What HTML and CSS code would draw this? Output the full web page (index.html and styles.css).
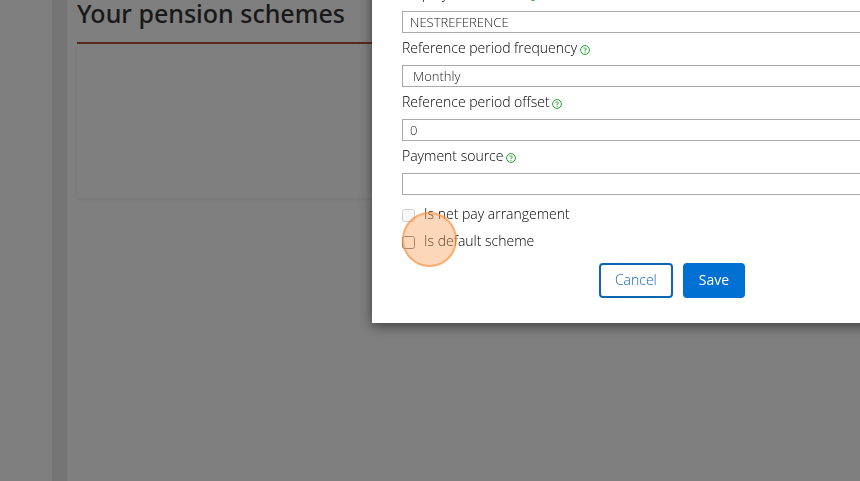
FILE: index.html
```
<!DOCTYPE html>
<html lang="en">
<head>
    <meta charset="UTF-8">
    <meta name="viewport" content="width=device-width, initial-scale=1.0">
    <title>Your pension schemes</title>
    <link rel="stylesheet" href="styles.css">
</head>
<body>
    <svg class="sprite" aria-hidden="true">
        <symbol id="help" viewBox="0 0 10 10">
            <circle cx="5" cy="5" r="4.4" fill="none" stroke="currentColor" stroke-width="1"/>
            <path d="M3.4 3.1H5.3Q6.6 3.3 6.4 4.3Q6.2 5 5 5.2V6" fill="none" stroke="currentColor" stroke-width="0.9"/>
            <path d="M4.5 6.8H5.5V7.8H4.5Z" fill="currentColor"/>
        </symbol>
    </svg>

    <div class="page">
        <div class="sidebar"></div>
        <main class="content">
            <h1>Your pension schemes</h1>
            <div class="panel"></div>
        </main>
    </div>

    <div class="overlay">
        <form class="modal" role="dialog" aria-label="Pension scheme">
            <div class="form-group">
                <label for="employerRef">Employer reference <svg class="help"><use href="#help"/></svg></label>
                <input type="text" id="employerRef" value="NESTREFERENCE">
            </div>
            <div class="form-group">
                <label for="frequency">Reference period frequency <svg class="help"><use href="#help"/></svg></label>
                <select id="frequency">
                    <option selected>Monthly</option>
                    <option>Weekly</option>
                </select>
            </div>
            <div class="form-group">
                <label for="offset">Reference period offset <svg class="help"><use href="#help"/></svg></label>
                <input type="text" id="offset" value="0">
            </div>
            <div class="form-group">
                <label for="source">Payment source <svg class="help"><use href="#help"/></svg></label>
                <input type="text" id="source">
            </div>

            <div class="checkbox-group">
                <div class="check">
                    <input type="checkbox" id="netPay" disabled>
                    <label for="netPay">Is net pay arrangement</label>
                </div>
                <div class="check">
                    <input type="checkbox" id="defaultScheme">
                    <label for="defaultScheme">Is default scheme</label>
                    <span class="click-marker"></span>
                </div>
            </div>

            <div class="buttons">
                <button type="button" class="cancel">Cancel</button>
                <button type="submit" class="save">Save</button>
            </div>
        </form>
    </div>
</body>
</html>
```
FILE: styles.css
```
* {
    box-sizing: border-box;
}

body {
    margin: 0;
    font-family: 'Open Sans', sans-serif;
    font-size: 14px;
    color: #000;
    background: #fff;
    overflow: hidden;
}

.sprite {
    display: none;
}

.page {
    display: flex;
    min-height: 100vh;
}

.sidebar {
    width: 67px;
    border-right: 15px solid #ebebeb;
}

.content {
    flex: 1;
    padding: 0 10px;
}

h1 {
    margin: 0;
    padding-bottom: 16px;
    border-bottom: 2px solid #b5532d;
    font-family: 'Noto Sans', sans-serif;
    font-size: 25px;
    line-height: 26px;
    font-weight: 500;
    color: #333;
}

.panel {
    height: 154px;
    box-shadow: 0 1px 4px rgba(0, 0, 0, 0.08);
}

.overlay {
    position: fixed;
    inset: 0;
    background: rgba(0, 0, 0, 0.5);
    overflow: hidden;
}

.modal {
    position: absolute;
    top: -51px;
    left: 372px;
    width: 600px;
    padding: 30px 30px 25px;
    background: #fff;
    box-shadow: 0 3px 12px rgba(0, 0, 0, 0.5);
}

.form-group label {
    display: block;
    height: 32px;
    padding-top: 5px;
    line-height: 20px;
}

label {
    font-weight: 300;
}

.help {
    width: 10px;
    height: 10px;
    margin-left: -1px;
    color: #1fa32b;
    vertical-align: -2px;
}

.form-group input,
.form-group select {
    display: block;
    width: 100%;
    height: 22px;
    margin: 0;
    padding: 0 7px;
    border: 1px solid #aaa;
    border-radius: 0;
    background: #fff;
    font-family: inherit;
    font-size: 13px;
    font-weight: 300;
    color: #222;
    appearance: none;
}

.form-group select {
    padding: 0 10px;
}

.checkbox-group {
    padding-top: 6px;
}

.check {
    position: relative;
    display: flex;
    align-items: center;
    height: 27px;
}

.check label {
    padding-bottom: 2px;
}

.check input {
    width: 13px;
    height: 13px;
    margin: 2px 9px 0 0;
}

/* highlights the spot to click */
.click-marker {
    position: absolute;
    left: 0;
    top: -16px;
    width: 55px;
    height: 55px;
    border: 2px solid rgba(247, 145, 61, 0.6);
    border-radius: 50%;
    background: rgba(250, 155, 80, 0.4);
    pointer-events: none;
}

.buttons {
    display: flex;
    justify-content: center;
    gap: 10px;
    padding-top: 8px;
}

button {
    height: 35px;
    padding: 0 14px 2px;
    border: 2px solid #0070d2;
    border-radius: 4px;
    font-family: inherit;
    font-size: 14px;
    cursor: pointer;
}

.cancel {
    border-color: #0f66b0;
    background: #fff;
    color: #0f66b0;
    font-weight: 300;
}

.save {
    background: #0070d2;
    color: #fff;
}
```
